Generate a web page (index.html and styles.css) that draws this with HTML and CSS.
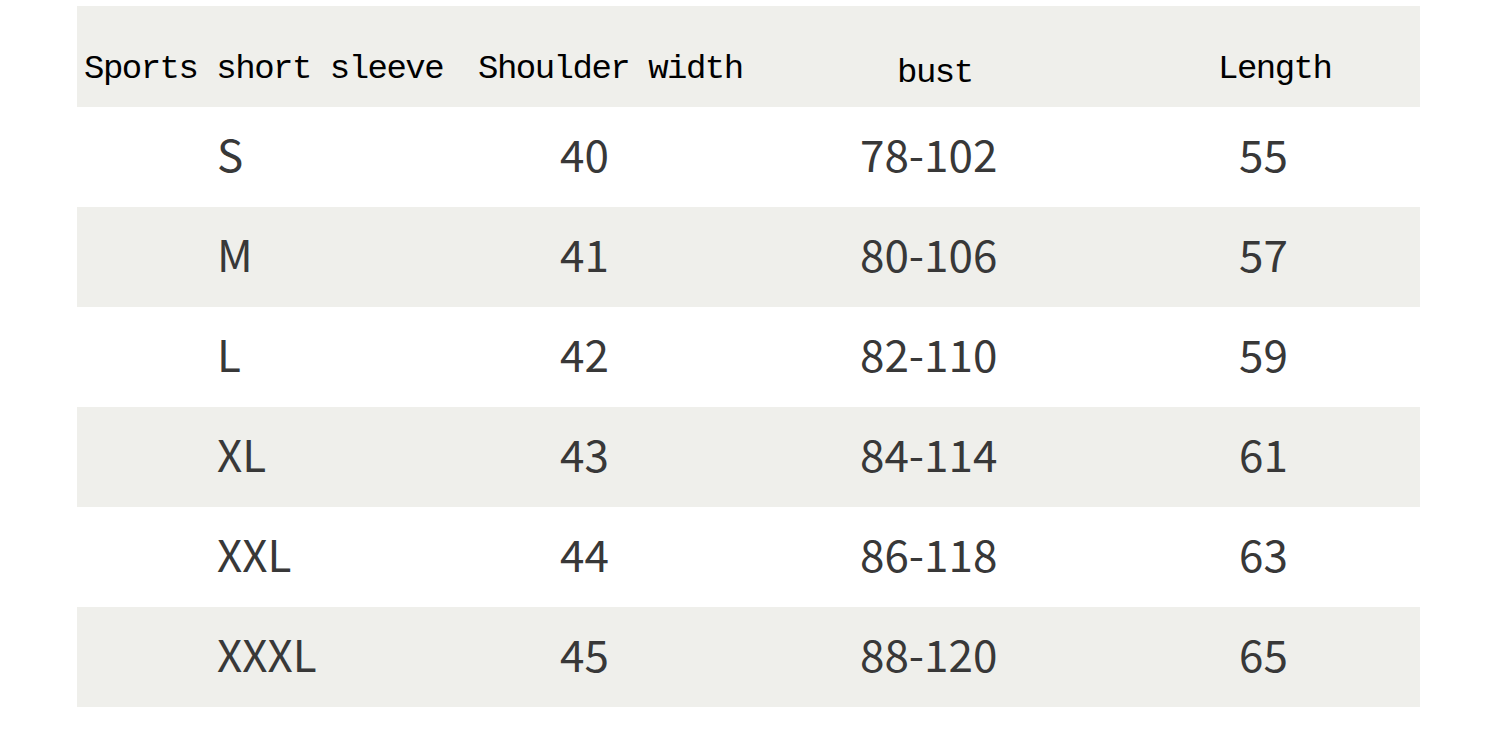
FILE: index.html
```html
<!DOCTYPE html>
<html>
<head>
<meta charset="utf-8">
<link rel="stylesheet" href="styles.css">
</head>
<body>
<div class="page">
  <div class="table">
    <div class="row head">
      <div class="cell c1">Sports short sleeve</div>
      <div class="cell c2">Shoulder width</div>
      <div class="cell c3 bust">bust</div>
      <div class="cell c4">Length</div>
    </div>
    <div class="row body">
      <div class="cell c1">S</div><div class="cell c2">40</div><div class="cell c3">78-102</div><div class="cell c4">55</div>
    </div>
    <div class="row body alt">
      <div class="cell c1">M</div><div class="cell c2">41</div><div class="cell c3">80-106</div><div class="cell c4">57</div>
    </div>
    <div class="row body">
      <div class="cell c1">L</div><div class="cell c2">42</div><div class="cell c3">82-110</div><div class="cell c4">59</div>
    </div>
    <div class="row body alt">
      <div class="cell c1">XL</div><div class="cell c2">43</div><div class="cell c3">84-114</div><div class="cell c4">61</div>
    </div>
    <div class="row body">
      <div class="cell c1">XXL</div><div class="cell c2">44</div><div class="cell c3">86-118</div><div class="cell c4">63</div>
    </div>
    <div class="row body alt">
      <div class="cell c1">XXXL</div><div class="cell c2">45</div><div class="cell c3">88-120</div><div class="cell c4">65</div>
    </div>
  </div>
</div>
</body>
</html>
```
FILE: styles.css
```css
html, body {
  margin: 0;
  padding: 0;
  background: #ffffff;
}
.page {
  padding: 6px 0 0 77px;
}
.table {
  width: 1343px;
  display: flex;
  flex-direction: column;
}
.row {
  display: grid;
  grid-template-columns: 383px 330px 330px 300px;
  align-items: center;
}
.head {
  height: 101px;
  background: #efefeb;
  font-family: "Liberation Mono", monospace;
  font-size: 34px;
  letter-spacing: -1.5px;
  color: #000;
}
.head .cell {
  padding-top: 24px;
  white-space: nowrap;
}
.head .c1 { padding-left: 7px; }
.head .c2 { padding-left: 18px; }
.head .c3 { padding-left: 107px; padding-top: 32px; }
.head .c4 { padding-left: 98px; }
.body {
  height: 100px;
  font-family: "Noto Sans CJK SC", "Noto Sans", sans-serif;
  font-size: 44px;
  color: #383838;
  line-height: 1;
}
.body .cell { padding-bottom: 8px; }
.body .c1 { padding-left: 140px; }
.body .c2 { padding-left: 100px; }
.body .c3 { padding-left: 70px; }
.body .c4 { padding-left: 119px; }
.alt {
  background: #efefeb;
}
```
